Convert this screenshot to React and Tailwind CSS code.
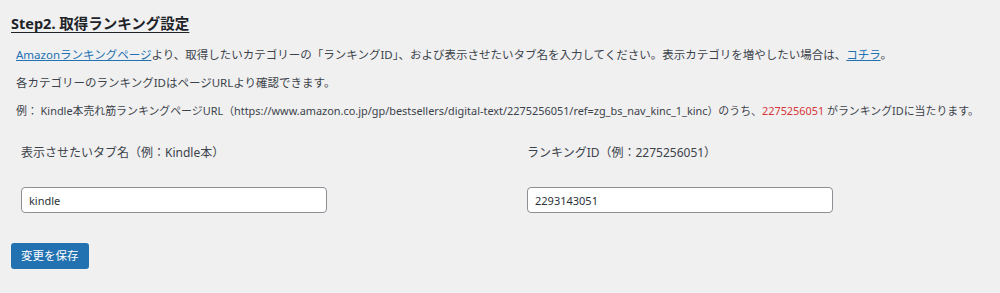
export default function App() {
  return (
    <div className="min-h-[293px] w-[1000px] bg-[#f0f0f1] text-[#3c434a]" style={{ fontFamily: '"Noto Sans", "Noto Sans CJK JP", sans-serif' }}>
      <div className="px-[11px] pt-[12px]">
        <h2 className="text-[14.5px] font-bold leading-[22px] text-[#1d2327] underline underline-offset-[3px]">Step2. 取得ランキング設定</h2>

        <p className="mt-[13px] pl-[5px] text-[11.5px] leading-[16px]">
          <a className="text-[#2271b1] underline">Amazonランキングページ</a>より、取得したいカテゴリーの「ランキングID」、および表示させたいタブ名を入力してください。表示カテゴリを増やしたい場合は、<a className="text-[#2271b1] underline">コチラ</a>。
        </p>
        <p className="mt-[12px] pl-[5px] text-[11.5px] leading-[16px]">各カテゴリーのランキングIDはページURLより確認できます。</p>
        <p className="mt-[12px] pl-[5px] text-[10.9px] leading-[16px]">
          例： Kindle本売れ筋ランキングページURL（https://www.amazon.co.jp/gp/bestsellers/digital-text/2275256051/ref=zg_bs_nav_kinc_1_kinc）のうち、<span className="text-[#d63638]">2275256051</span> がランキングIDに当たります。
        </p>

        <div className="mt-[25px] flex pl-[10px]">
          <div className="w-[506px]">
            <div className="text-[12px] leading-[18px]">表示させたいタブ名（例：Kindle本）</div>
            <input readOnly value="kindle" className="mt-[25px] h-[26px] w-[306px] rounded-[4px] border border-[#8c8f94] bg-white px-[7px] text-[11px] text-[#2c3338] outline-none" />
          </div>
          <div>
            <div className="text-[12px] leading-[18px]">ランキングID（例：2275256051）</div>
            <input readOnly value="2293143051" className="mt-[25px] h-[26px] w-[306px] rounded-[4px] border border-[#8c8f94] bg-white px-[7px] text-[11px] text-[#2c3338] outline-none" />
          </div>
        </div>

        <button className="mt-[30px] h-[26px] rounded-[3px] bg-[#2271b1] px-[10px] text-[11.5px] text-white">変更を保存</button>
      </div>
    </div>
  )
}
